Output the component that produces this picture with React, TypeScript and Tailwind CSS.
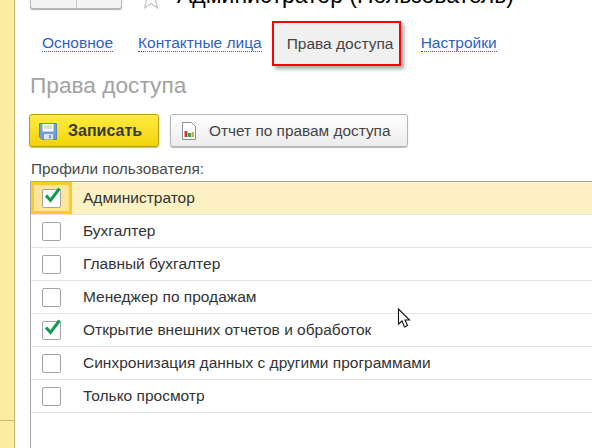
import React from 'react';

const profiles = [
  { name: 'Администратор', checked: true, current: true },
  { name: 'Бухгалтер', checked: false },
  { name: 'Главный бухгалтер', checked: false },
  { name: 'Менеджер по продажам', checked: false },
  { name: 'Открытие внешних отчетов и обработок', checked: true },
  { name: 'Синхронизация данных с другими программами', checked: false },
  { name: 'Только просмотр', checked: false },
];

const tabLink = 'text-[#2f5fc4] text-[15.5px] leading-[16px] border-b border-dotted border-[#2f5fc4]';

const Checkbox = ({ checked }: { checked: boolean }) => (
  <div className="relative w-[19px] h-[19px] bg-white border border-[#a3a3a3] rounded-[2px]">
    {checked && (
      <svg className="absolute left-[1px] -top-[4px]" width="18" height="18" viewBox="0 0 18 18">
        <path d="M2 9.5 L6.5 14.5 L15.5 2.5" fill="none" stroke="#0f9a4e" strokeWidth="3" />
      </svg>
    )}
  </div>
);

export default function App() {
  return (
    <div className="relative flex w-[592px] h-[448px] overflow-hidden bg-white font-['Liberation_Sans',sans-serif]">
      {/* Левая панель */}
      <div className="flex flex-col w-[15px] shrink-0 bg-[#fbeba3] border-r border-[#c9b96a]">
        <div className="h-[421px] border-b border-[#c9b96a]" />
      </div>

      <div className="flex-1 min-w-0 pl-[15px]">
        {/* Шапка */}
        <div className="flex items-end h-[9px] whitespace-nowrap">
          <div className="flex shrink-0 w-[92px] h-[20px] bg-[#f4f4f4] border border-[#b5b5b5] rounded-[3px] shadow-[0_1px_1px_#aaa]">
            <div className="w-[46px] border-r border-[#c8c8c8]" />
          </div>
          <svg className="ml-[18px] shrink-0" width="22" height="22" viewBox="0 0 22 22">
            <path d="M11 1 L14 8.5 L21 9 L15.5 13.5 L17.5 21 L11 16.5 L4.5 21 L6.5 13.5 L1 9 L8 8.5 Z" fill="#fff" stroke="#c4c4c4" strokeWidth="1.2" />
          </svg>
          <div className="ml-[15px] text-[23px] leading-[26px] text-black mb-[1px]">Администратор (Пользователь)</div>
        </div>

        {/* Вкладки */}
        <div className="flex items-center mt-[12px] h-[45px] whitespace-nowrap">
          <a className={`${tabLink} ml-[12px]`}>Основное</a>
          <a className={`${tabLink} ml-[25px]`}>Контактные лица</a>
          <div className="ml-[10px] flex items-center w-[129px] h-[45px] pl-[13px] bg-[#f0f0f0] border-[2px] border-[#ff0000] text-[#444] text-[15.5px] shadow-[3px_3px_4px_rgba(0,0,0,0.35)]">
            Права доступа
          </div>
          <a className={`${tabLink} ml-[20px]`}>Настройки</a>
        </div>

        <h1 className="mt-[6px] text-[22.7px] leading-[26px] text-[#a2a2a2]">Права доступа</h1>

        {/* Кнопки */}
        <div className="flex gap-[11px] mt-[16px] ml-[-1px]">
          <button className="flex items-center w-[130px] h-[33px] pl-[9px] rounded-[3px] border border-[#b9a000] bg-gradient-to-b from-[#ffec3d] to-[#f2d300] shadow-[0_1px_1px_#bbb] text-[#3a3a3a] text-[16px] font-bold">
            <svg width="18" height="18" viewBox="0 0 18 18">
              <path d="M0.5 1.5 H17.5 V17.5 H3 L0.5 15 Z" fill="#6f9fd8" stroke="#5a86bd" />
              <rect x="3.5" y="2" width="11" height="7.5" fill="#fff" />
              <path d="M5 4 H13 M5 6 H13" stroke="#a9c4e4" />
              <rect x="5" y="12" width="9" height="5.5" fill="#e3e3e3" />
              <rect x="10" y="13" width="2" height="3.5" fill="#6f9fd8" />
            </svg>
            <span className="ml-[11px]">Записать</span>
          </button>
          <button className="flex items-center w-[238px] h-[33px] pl-[10px] rounded-[3px] border border-[#b5b5b5] bg-gradient-to-b from-white to-[#ececec] shadow-[0_1px_1px_#bbb] text-[#444] text-[15.4px] whitespace-nowrap">
            <svg width="16" height="18" viewBox="0 0 16 18">
              <path d="M1.5 0.5 H10.5 L14.5 4.5 V17.5 H1.5 Z" fill="#fff" stroke="#8a8f96" />
              <rect x="3.5" y="9" width="3" height="6" fill="#d8392b" />
              <rect x="7" y="11" width="3" height="4" fill="#2fa84f" />
              <rect x="10.5" y="10" width="2.5" height="5" fill="#c9b23a" />
            </svg>
            <span className="ml-[12px]">Отчет по правам доступа</span>
          </button>
        </div>

        <div className="mt-[13px] ml-[1px] text-[15.4px] leading-[17px] text-[#4a4a4a]">Профили пользователя:</div>

        {/* Таблица профилей */}
        <div className="mt-[4px] h-[300px] border-l border-t border-[#a6a6a6]">
          {profiles.map((p) => (
            <div key={p.name} className={`flex items-center h-[33px] border-b border-[#e4e4e4] ${p.current ? 'bg-[#fdf1c4]' : ''}`}>
              <div className={`flex items-center justify-center w-[41px] h-[32px] shrink-0 ${p.current ? 'border-[3px] border-[#fccb2a] bg-[#fde69a]' : ''}`}>
                <Checkbox checked={p.checked} />
              </div>
              <span className="ml-[11px] text-[15.5px] text-[#333] whitespace-nowrap">{p.name}</span>
            </div>
          ))}
        </div>
      </div>

      {/* Курсор мыши */}
      <svg className="absolute left-[397px] top-[308px]" width="16" height="21" viewBox="0 0 16 21">
        <path d="M1.5 1 V16 L5 13 L7.5 19 L10.5 17.5 L8 12 L12.5 12 Z" fill="#fff" stroke="#111" strokeWidth="1.1" />
      </svg>
    </div>
  );
}
